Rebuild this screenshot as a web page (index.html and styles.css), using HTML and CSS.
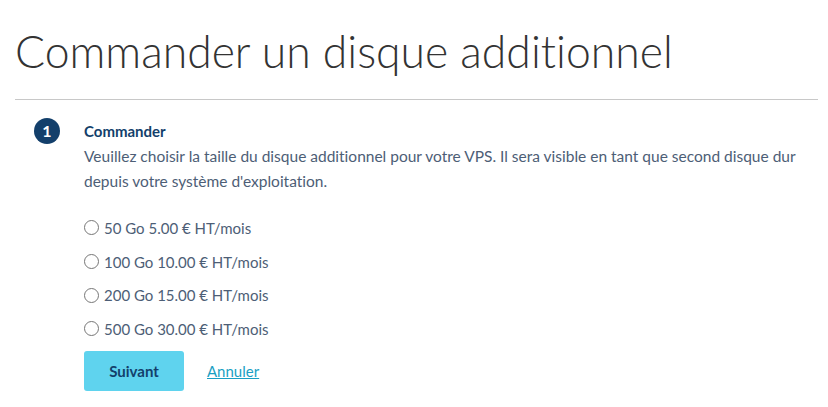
FILE: index.html
```html
<!DOCTYPE html>
<html>
<head>
<meta charset="utf-8">
<title>Commander un disque additionnel</title>
<link rel="stylesheet" href="styles.css">
</head>
<body>

<div id="page">
  <h1 class="page-title">Commander un disque additionnel</h1>

  <div class="step">
    <div class="step-number">1</div>
    <div class="step-body">
      <div class="step-title">Commander</div>
      <p class="step-desc">Veuillez choisir la taille du disque additionnel pour votre VPS. Il sera visible en tant que second disque dur depuis votre système d'exploitation.</p>

      <ul class="choices">
        <li><label><input type="radio" name="disk" value="50"> 50 Go 5.00 € HT/mois</label></li>
        <li><label><input type="radio" name="disk" value="100"> 100 Go 10.00 € HT/mois</label></li>
        <li><label><input type="radio" name="disk" value="200"> 200 Go 15.00 € HT/mois</label></li>
        <li><label><input type="radio" name="disk" value="500"> 500 Go 30.00 € HT/mois</label></li>
      </ul>

      <div class="actions">
        <button class="btn-primary">Suivant</button>
        <a href="#" class="link-cancel">Annuler</a>
      </div>
    </div>
  </div>
</div>

</body>
</html>
```

FILE: styles.css
```css
body {
  margin:0;
  background:#fff;
  font-family:Lato, "Open Sans", sans-serif;
  font-variant-ligatures:none;
  color:#4d5e76;
}

#page {
  padding:0 10px 0 15px;
}

.page-title {
  margin:0;
  padding-top:24px;
  padding-bottom:22px;
  font-weight:300;
  font-size:44.5px;
  line-height:53px;
  color:#333;
  border-bottom:1px solid #c8c8c8;
}

.step {
  display:flex;
  padding-top:18px;
  padding-left:19px;
}

.step-number {
  flex:none;
  width:26px;
  height:26px;
  border-radius:50%;
  background:#133f6b;
  color:#fff;
  font-weight:700;
  font-size:16px;
  line-height:26px;
  text-align:center;
}

.step-body {
  padding-left:24px;
}

.step-title {
  color:#133f6b;
  font-weight:700;
  font-size:15px;
  line-height:26px;
}

.step-desc {
  margin:0;
  font-size:15.5px;
  line-height:25px;
}

.choices {
  list-style:none;
  margin:17px 0 0;
  padding:0;
}

.choices li {
  height:33.7px;
  display:flex;
  align-items:center;
}

.choices label {
  display:flex;
  align-items:center;
  font-size:15px;
}

.choices input {
  margin:0 5px 0 0;
  width:15px;
  height:15px;
}

.actions {
  display:flex;
  align-items:center;
  margin-top:5px;
}

.btn-primary {
  width:100px;
  height:40px;
  border:none;
  border-radius:3px;
  background:#5fd3ee;
  color:#133f6b;
  font-family:inherit;
  font-weight:700;
  font-size:15px;
}

.link-cancel {
  margin-left:23px;
  color:#1a9fc3;
  font-size:15px;
}
```
